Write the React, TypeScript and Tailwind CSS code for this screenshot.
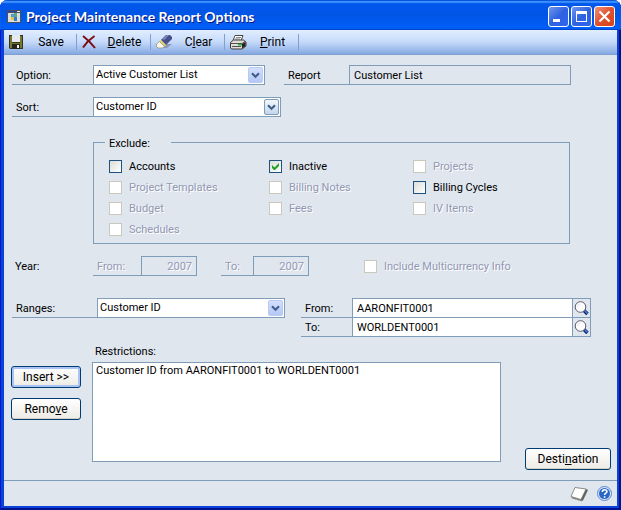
import { useId, type ReactNode } from "react";

const field = "h-5 border border-[#7f9db9] px-1 text-[11px] leading-4 outline-none";
const dimmed = "text-[#9298b4] [text-shadow:1px_1px_0_#fff]";

function Chevron({ pale }: { pale?: boolean }) {
  return (
    <span
      className={
        "pointer-events-none absolute top-0.5 right-0.5 flex h-4 w-[15px] items-center justify-center rounded-xs border " +
        (pale
          ? "border-[#7f9db9] bg-linear-to-b from-[#f4f8fc] to-[#c3d6ea]"
          : "border-[#b8c9f5] bg-linear-to-b from-[#d3dffc] to-[#b4c8f6]")
      }
    >
      <svg width="9" height="7" viewBox="0 0 9 7" aria-hidden="true">
        <path d="M1 1.2 4.5 4.7 8 1.2" fill="none" stroke="#40608c" strokeWidth="2.2" />
      </svg>
    </span>
  );
}

function LineLabel({ htmlFor, className, children }: { htmlFor: string; className: string; children: ReactNode }) {
  return (
    <label htmlFor={htmlFor} className={"h-5 shrink-0 border-b border-[#7f9db9] pt-[3px] pl-1 leading-4 " + className}>
      {children}
    </label>
  );
}

function Combo({ id, value, pale, className }: { id: string; value: string; pale?: boolean; className: string }) {
  return (
    <div className={"relative shrink-0 " + className}>
      <select id={id} defaultValue={value} className={field + " block w-full appearance-none bg-white pl-0.5"}>
        <option>{value}</option>
      </select>
      <Chevron pale={pale} />
    </div>
  );
}

function Check({ label, enabled, checked }: { label: string; enabled?: boolean; checked?: boolean }) {
  const id = useId();
  return (
    <div className="flex h-[21px] items-center gap-[7px]">
      <span className="relative size-[13px] shrink-0">
        <input
          id={id}
          type="checkbox"
          defaultChecked={checked}
          disabled={!enabled}
          className="block size-[13px] appearance-none border border-[#1c5180] bg-linear-to-br from-[#dcdcd7] to-white disabled:border-[#cac8bb] disabled:from-white"
        />
        {checked && (
          <svg className="pointer-events-none absolute top-0 left-0" width="13" height="13" viewBox="0 0 13 13" aria-hidden="true">
            <path d="M3 5v3l2 2h1l4-4V3L5.500 7.500z" fill="#21a121" />
          </svg>
        )}
      </span>
      <label htmlFor={id} className={enabled ? "leading-4" : "leading-4 " + dimmed}>
        {label}
      </label>
    </div>
  );
}

function ToolButton({ icon, width, children }: { icon: ReactNode; width: string; children: ReactNode }) {
  return (
    <button type="button" className={"flex h-4 shrink-0 items-center border-r border-[#7f9fd0] pl-[5px] " + width}>
      <span className="w-[17px]">{icon}</span>
      <span className="flex-1 text-center text-[12px] leading-4">{children}</span>
    </button>
  );
}

function XpButton({ className, focused, children }: { className: string; focused?: boolean; children: ReactNode }) {
  return (
    <button
      type="button"
      className={
        "h-[22px] rounded-[3px] border border-[#003c74] bg-linear-to-b from-white to-[#ecebe5] text-[12px] leading-4 " +
        (focused ? "shadow-[inset_0_0_0_2px_#a9c3f3] " : "shadow-[inset_0_-1px_0_#d6d0c5] ") +
        className
      }
    >
      {children}
    </button>
  );
}

function Lookup({ label }: { label: string }) {
  return (
    <button type="button" aria-label={label} className="flex h-5 w-[18px] shrink-0 items-center justify-center border border-[#7f9db9] border-l-0">
      <svg width="15" height="16" viewBox="0 0 15 16" aria-hidden="true">
        <path d="m9.500 10 4 4" stroke="#10206c" strokeWidth="3.600" />
        <path d="m10.500 10.500 3 3" stroke="#3f86ec" strokeWidth="1.400" />
        <circle cx="6.500" cy="7" r="5.300" fill="#fdfdfd" stroke="#5b5a68" />
        <path d="M3.500 7a3 3 0 0 1 3-3" fill="none" stroke="#dfe6f2" />
      </svg>
    </button>
  );
}

const SaveIcon = (
  <svg width="14" height="14" viewBox="0 0 14 14" aria-hidden="true">
    <path d="M0 0h14v14H1l-1-1z" fill="#34341a" />
    <path d="M1 1h2v7h8V1h2v12h-2V9H3v4H1z" fill="#77772e" />
    <path d="M3 0h8v7H3z" fill="#e6eaf0" />
    <path d="M3 9h8v5H3z" fill="#24241c" />
    <path d="M8 10h2v3H8z" fill="#f0f0f0" />
  </svg>
);
const DeleteIcon = (
  <svg width="14" height="14" viewBox="0 0 14 14" aria-hidden="true">
    <path d="M1 1c4 3 8 7 12 12M12.500 1C8 4 4 8 1 12.500" fill="none" stroke="#7c0c10" strokeWidth="2" />
  </svg>
);
const ClearIcon = (
  <svg width="17" height="14" viewBox="0 0 17 14" aria-hidden="true">
    <path d="m5 13 5-4h6l-5 4z" fill="#8c98b8" />
    <path d="m5 5 5-5h4l2 2v2l-6 6z" fill="#46508c" />
    <path d="m7 4 4-4h2L8 5z" fill="#8793c2" />
    <path d="m5 5 5 5-1.500 1.500-5-5z" fill="#e4cf62" />
    <path d="m3.500 6.500 5 5-2 1.500H2L.5 11.500V9z" fill="#fbf8e8" stroke="#8d8c78" strokeWidth=".7" />
  </svg>
);
const PrintIcon = (
  <svg width="17" height="15" viewBox="0 0 17 15" aria-hidden="true">
    <path d="M5 .5h8l-2 5H3z" fill="#fff" stroke="#444" />
    <path d="M6 2.500h5M5 4h5" stroke="#888" />
    <path d="m.5 7.500 3-2.500h10l2.500 2v4L12 14H1.500l-1-1z" fill="#deded6" stroke="#3a3a3a" />
    <path d="M1 8.500h11l3-2M2 11.500h9" fill="none" stroke="#555" />
    <path d="m12 9 3.500-2v4L12 13.500z" fill="#222" />
    <path d="M8 9.800h4" stroke="#24b53a" strokeWidth="1.600" />
  </svg>
);

const caption = "flex size-[21px] items-center justify-center rounded-[3px] border border-white bg-linear-to-br";

export default function App() {
  return (
    <div className="bg-white font-[Roboto,'Liberation_Sans',sans-serif] text-[11px] text-black">
      <main className="flex min-h-screen flex-col overflow-hidden rounded-t-lg bg-[#0842d8] shadow-[inset_1px_0_0_#0019cf,inset_-2px_0_0_#00138c,inset_0_-2px_0_#00138c]">
        <header className="flex h-[30px] shrink-0 items-center bg-linear-to-b from-[#0058ee] via-[#0055e5] to-[#0060fc] pr-[6px] pl-[7px] shadow-[inset_0_1px_0_#0a56d8,inset_0_3px_1px_#3b90ff,inset_0_-1px_0_#0046c8]">
          <svg className="mt-[2px]" width="14" height="13" viewBox="0 0 14 13" aria-hidden="true">
            <path d="M0 0h14v13H0z" fill="#4c5058" />
            <path d="M1 3h12v9H1z" fill="#dcdcd8" />
            <path d="M1 1h9v1H1z" fill="#2048a8" />
            <path d="M10 1h3v1h-3z" fill="#e8e8e8" />
            <path d="M4 4h3v3H4z" fill="#4a9ad8" />
            <path d="M7 3h3v4H7z" fill="#58a888" />
            <path d="M4 7h3v3H4z" fill="#e8c040" />
            <path d="M7 7h3v4H7z" fill="#2f7ccc" />
          </svg>
          <h1 className="ml-[5px] flex-1 pt-1 font-[Lato,sans-serif] text-[14px] leading-5 font-bold text-white [text-shadow:1px_1px_0_#0a1883]">
            Project Maintenance Report Options
          </h1>
          <div className="flex gap-0.5 pt-[3px]">
            <button type="button" aria-label="Minimize" className={caption + " from-[#6f95f0] via-[#2f62e0] to-[#2f66f0]"}>
              <svg width="13" height="13" viewBox="0 0 13 13" aria-hidden="true">
                <path d="M1 9h7v3H1z" fill="#fff" />
              </svg>
            </button>
            <button type="button" aria-label="Maximize" className={caption + " from-[#6f95f0] via-[#2f62e0] to-[#2f66f0]"}>
              <svg width="13" height="13" viewBox="0 0 13 13" aria-hidden="true">
                <path d="M1 1h11v11H1zM2 4v7h9V4z" fill="#fff" fillRule="evenodd" />
              </svg>
            </button>
            <button type="button" aria-label="Close" className={caption + " from-[#ec9078] via-[#e0502c] to-[#d84414]"}>
              <svg width="13" height="13" viewBox="0 0 13 13" aria-hidden="true">
                <path d="m1.500 1.500 10 10m0-10-10 10" stroke="#fff" strokeWidth="2.200" />
              </svg>
            </button>
          </div>
        </header>

        <div className="mx-1 mb-1 flex flex-1 flex-col bg-[#dfe6ee]">
          <nav aria-label="Toolbar" className="flex h-[25px] shrink-0 items-center border-b border-[#7f9fd0] bg-linear-to-b from-[#e2eeff] via-[#c5dafa] to-[#86a9e2]">
            <ToolButton icon={SaveIcon} width="w-[73px]">Save</ToolButton>
            <ToolButton icon={DeleteIcon} width="w-[74px]"><u>D</u>elete</ToolButton>
            <ToolButton icon={ClearIcon} width="w-[74px]">C<u>l</u>ear</ToolButton>
            <ToolButton icon={PrintIcon} width="w-[74px]"><u>P</u>rint</ToolButton>
          </nav>

          <form className="flex flex-1 flex-col pt-[10px]" onSubmit={(e) => e.preventDefault()}>
            <div className="flex pr-[46px] pl-2">
              <LineLabel htmlFor="option" className="w-[81px]">Option:</LineLabel>
              <Combo id="option" value="Active Customer List" className="w-[172px]" />
              <LineLabel htmlFor="report" className="ml-[19px] w-[65px]">Report</LineLabel>
              <input id="report" readOnly value="Customer List" className={field + " min-w-0 flex-1 bg-transparent"} />
            </div>

            <div className="mt-3 flex pl-2">
              <LineLabel htmlFor="sort" className="w-[81px]">Sort:</LineLabel>
              <Combo id="sort" value="Customer ID" pale className="w-[188px]" />
            </div>

            <fieldset className="mt-[15px] mr-[47px] ml-[89px] border border-[#7f9db9] pb-[3px] pl-[15px]">
              <legend className="-ml-1 w-[66px] pt-1 pl-1 leading-4">Exclude:</legend>
              <div className="grid h-[88px] grid-cols-[160px_144px_1fr] content-start pt-1">
                <Check label="Accounts" enabled />
                <Check label="Inactive" enabled checked />
                <Check label="Projects" />
                <Check label="Project Templates" />
                <Check label="Billing Notes" />
                <Check label="Billing Cycles" enabled />
                <Check label="Budget" />
                <Check label="Fees" />
                <Check label="IV Items" />
                <Check label="Schedules" />
              </div>
            </fieldset>

            <div className="mt-3 flex pl-2">
              <span className="w-[81px] pt-[3px] pl-[3px] leading-4">Year:</span>
              <LineLabel htmlFor="yearFrom" className={"w-12 " + dimmed}>From:</LineLabel>
              <input id="yearFrom" disabled value="2007" className={field + " w-14 text-right " + dimmed} />
              <LineLabel htmlFor="yearTo" className={"ml-6 w-8 " + dimmed}>To:</LineLabel>
              <input id="yearTo" disabled value="2007" className={field + " w-14 text-right " + dimmed} />
              <div className="ml-[55px]">
                <Check label="Include Multicurrency Info" />
              </div>
            </div>

            <div className="mt-[21px] flex pr-[26px] pl-2">
              <LineLabel htmlFor="ranges" className="w-[85px]">Ranges:</LineLabel>
              <Combo id="ranges" value="Customer ID" className="w-[188px]" />
              <div className="ml-4 flex-1">
                <div className="flex">
                  <LineLabel htmlFor="from" className="w-[51px]">From:</LineLabel>
                  <input id="from" defaultValue="AARONFIT0001" className={field + " min-w-0 flex-1 bg-white"} />
                  <Lookup label="Look up from" />
                </div>
                <div className="-mt-px flex">
                  <LineLabel htmlFor="to" className="w-[51px]">To:</LineLabel>
                  <input id="to" defaultValue="WORLDENT0001" className={field + " min-w-0 flex-1 bg-white"} />
                  <Lookup label="Look up to" />
                </div>
              </div>
            </div>

            <div className="mt-[7px] flex flex-1 pr-[6px] pb-[10px] pl-[7px]">
              <div className="flex w-[81px] flex-col items-start gap-[10px] pt-[22px]">
                <XpButton className="w-[70px]" focused>Insert &gt;&gt;</XpButton>
                <XpButton className="w-[70px]">Remo<u>v</u>e</XpButton>
              </div>
              <div className="flex flex-1 flex-col pb-2">
                <label htmlFor="restrictions" className="pb-0.5 pl-[3px] leading-4">Restrictions:</label>
                <select id="restrictions" size={5} className="min-h-[100px] flex-1 appearance-none overflow-hidden border border-[#7f9db9] bg-white outline-none">
                  <option className="px-[3px] py-px leading-4">Customer ID from AARONFIT0001 to WORLDENT0001</option>
                </select>
              </div>
              <XpButton className="ml-6 w-[86px] self-end">Desti<u>n</u>ation</XpButton>
            </div>

            <footer className="flex h-[26px] items-center justify-end gap-2 border-t border-[#7f9db9] pr-[5px]">
              <button type="button" aria-label="Note">
                <svg width="19" height="16" viewBox="0 0 19 16" aria-hidden="true">
                  <path d="m11 13 5-10 2 1-5 10.500-2 .5z" fill="#62645c" />
                  <path d="m1 10.500 10 3 1 2-10-3z" fill="#8c8e86" />
                  <path d="m5 1.500 11 1.500-5 10.500-10-3z" fill="#fff" stroke="#6f7169" strokeWidth=".8" />
                </svg>
              </button>
              <button type="button" aria-label="Help">
                <svg width="15" height="15" viewBox="0 0 15 15" aria-hidden="true">
                  <circle cx="7.500" cy="7.500" r="7" fill="#dce8fa" stroke="#5b86cc" />
                  <circle cx="7.500" cy="7.500" r="5.500" fill="#2a66c4" />
                  <path d="M5.300 6c0-3 4.600-3 4.600-.4C9.900 7.300 7.600 7 7.600 9" fill="none" stroke="#fff" strokeWidth="1.600" />
                  <path d="M6.800 10.200h1.600v1.600H6.800z" fill="#fff" />
                </svg>
              </button>
            </footer>
          </form>
        </div>
      </main>
    </div>
  );
}
